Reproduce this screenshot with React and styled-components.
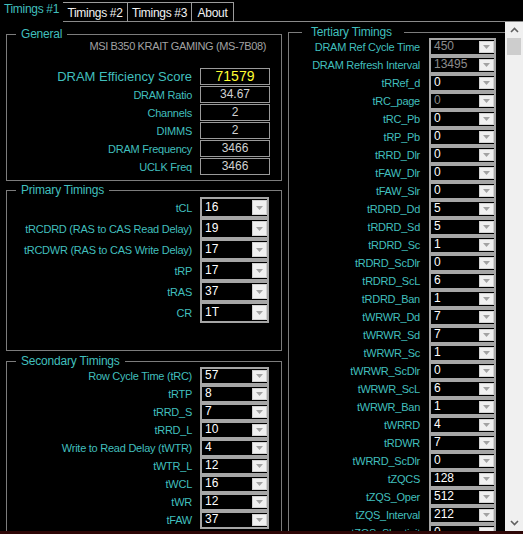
import React from "react";
import styled, { createGlobalStyle } from "styled-components";

const TEAL = "#40bfbd";

const GlobalStyle = createGlobalStyle`
  html, body {
    margin: 0;
    padding: 0;
    background: #000;
  }
  body {
    font-family: "Liberation Sans", Arial, sans-serif;
  }
`;

const Window = styled.div`
  width: 523px;
  height: 534px;
  background: #000;
  overflow: hidden;
  display: flex;
  flex-direction: column;
  font-family: "Liberation Sans", Arial, sans-serif;
`;

const TabBar = styled.div`
  display: flex;
  align-items: flex-end;
  height: 22px;
  flex-shrink: 0;
`;

const Tab = styled.div`
  box-sizing: border-box;
  width: ${(p) => p.$width}px;
  height: ${(p) => (p.$active ? 22 : 20)}px;
  padding-top: ${(p) => (p.$active ? 3 : 4)}px;
  text-align: center;
  font-size: 12px;
  letter-spacing: -0.3px;
  line-height: 13px;
  color: ${(p) => (p.$active ? TEAL : "#f2f2f2")};
  border-top: ${(p) => (p.$active ? "none" : "1px solid #9c9c9c")};
  border-right: ${(p) => (p.$active ? "none" : "1px solid #9c9c9c")};
  border-bottom: ${(p) => (p.$active ? "none" : "1px solid #8a8a8a")};
  white-space: nowrap;
`;

const TabFiller = styled.div`
  flex: 1;
  height: 1px;
  background: #8a8a8a;
`;

const Body = styled.div`
  flex: 1;
  display: flex;
  min-height: 0;
`;

const LeftColumn = styled.div`
  width: 282px;
  box-sizing: border-box;
  padding-left: 6px;
  display: flex;
  flex-direction: column;
  overflow: hidden;
  flex-shrink: 0;
`;

const Group = styled.fieldset`
  box-sizing: border-box;
  width: ${(p) => p.$width}px;
  margin: ${(p) => p.$top}px 0 0 0;
  padding: 0 ${(p) => p.$right}px ${(p) => p.$bottom}px 0;
  border: 1px solid #7c7c7c;
  min-width: 0;
  flex-shrink: 0;
`;

const Legend = styled.legend`
  margin-left: ${(p) => p.$offset}px;
  padding: 0 ${(p) => p.$padRight}px 0 ${(p) => p.$padLeft}px;
  font-size: 12px;
  line-height: 12px;
  letter-spacing: -0.2px;
  color: ${TEAL};
`;

const ModelName = styled.div`
  text-align: right;
  padding-right: 4px;
  font-size: 11px;
  line-height: 12px;
  letter-spacing: -0.35px;
  color: #a2a2a2;
`;

const FieldGrid = styled.div`
  display: grid;
  grid-template-columns: 1fr ${(p) => p.$col}px;
  column-gap: ${(p) => p.$gap}px;
  row-gap: ${(p) => p.$rowGap}px;
  align-items: center;
  margin-top: ${(p) => p.$top}px;
`;

const Label = styled.span`
  text-align: right;
  white-space: nowrap;
  font-size: ${(p) => (p.$big ? 13 : 11)}px;
  letter-spacing: ${(p) => (p.$big ? "0" : "-0.25px")};
  color: ${TEAL};
`;

const ReadBox = styled.div`
  box-sizing: border-box;
  height: 17px;
  border: 1px solid #9a9a9a;
  text-align: center;
  font-size: ${(p) => (p.$score ? 14 : 12)}px;
  line-height: 15px;
  color: ${(p) => (p.$score ? "#ffff33" : "#d2d2d2")};
`;

const ComboFrame = styled.div`
  box-sizing: border-box;
  display: flex;
  width: ${(p) => p.$width}px;
  height: ${(p) => p.$height}px;
  border: 2px solid #a6a6a6;
  background: #000;
  justify-self: start;
`;

const ComboValue = styled.span`
  flex: 1;
  padding-left: 3px;
  font-size: 12px;
  line-height: ${(p) => p.$height - 5}px;
  color: ${(p) => (p.$disabled ? "#8c8c8c" : "#ffffff")};
`;

const ComboButton = styled.span`
  width: 15px;
  margin: 1px 0;
  box-sizing: border-box;
  background: #f0f0f0;
  border: 1px solid #d2d2d2;
  display: flex;
  align-items: center;
  justify-content: center;
`;

const RightPanel = styled.div`
  flex: 1;
  display: flex;
  min-width: 0;
`;

const ScrollArea = styled.div`
  flex: 1;
  overflow: hidden;
  padding-left: 6px;
`;

const ScrollBar = styled.div`
  width: 18px;
  background: #f0f0f0;
  display: flex;
  flex-direction: column;
  flex-shrink: 0;
`;

const ScrollArrow = styled.div`
  height: 16px;
  display: flex;
  align-items: center;
  justify-content: center;
`;

const ScrollThumb = styled.div`
  height: 17px;
  margin: 0 2px;
  background: #cdcdcd;
`;

const ScrollTrack = styled.div`
  flex: 1;
`;

const StatusStrip = styled.div`
  height: 3px;
  flex-shrink: 0;
  background: #2e0707;
`;

function Combo({ value, height, width = 69, disabled }) {
  return (
    <ComboFrame $height={height} $width={width}>
      <ComboValue $height={height} $disabled={disabled}>
        {value}
      </ComboValue>
      <ComboButton>
        <svg width="7" height="4" viewBox="0 0 7 4">
          <path d="M0 0h7L3.5 4z" fill="#a3a3a3" />
        </svg>
      </ComboButton>
    </ComboFrame>
  );
}

function Chevron({ up }) {
  return (
    <svg width="9" height="6" viewBox="0 0 9 6">
      <polyline
        points={up ? "1,5 4.5,1.5 8,5" : "1,1 4.5,4.5 8,1"}
        fill="none"
        stroke="#606060"
        strokeWidth="1.6"
      />
    </svg>
  );
}

const general = [
  ["DRAM Ratio", "34.67"],
  ["Channels", "2"],
  ["DIMMS", "2"],
  ["DRAM Frequency", "3466"],
  ["UCLK Freq", "3466"],
];

const primary = [
  ["tCL", "16"],
  ["tRCDRD (RAS to CAS Read Delay)", "19"],
  ["tRCDWR (RAS to CAS Write Delay)", "17"],
  ["tRP", "17"],
  ["tRAS", "37"],
  ["CR", "1T"],
];

const secondary = [
  ["Row Cycle Time (tRC)", "57"],
  ["tRTP", "8"],
  ["tRRD_S", "7"],
  ["tRRD_L", "10"],
  ["Write to Read Delay (tWTR)", "4"],
  ["tWTR_L", "12"],
  ["tWCL", "16"],
  ["tWR", "12"],
  ["tFAW", "37"],
];

const tertiary = [
  ["DRAM Ref Cycle Time", "450", true],
  ["DRAM Refresh Interval", "13495", true],
  ["tRRef_d", "0"],
  ["tRC_page", "0", true],
  ["tRC_Pb", "0"],
  ["tRP_Pb", "0"],
  ["tRRD_Dlr", "0"],
  ["tFAW_Dlr", "0"],
  ["tFAW_Slr", "0"],
  ["tRDRD_Dd", "5"],
  ["tRDRD_Sd", "5"],
  ["tRDRD_Sc", "1"],
  ["tRDRD_ScDlr", "0"],
  ["tRDRD_ScL", "6"],
  ["tRDRD_Ban", "1"],
  ["tWRWR_Dd", "7"],
  ["tWRWR_Sd", "7"],
  ["tWRWR_Sc", "1"],
  ["tWRWR_ScDlr", "0"],
  ["tWRWR_ScL", "6"],
  ["tWRWR_Ban", "1"],
  ["tWRRD", "4"],
  ["tRDWR", "7"],
  ["tWRRD_ScDlr", "0"],
  ["tZQCS", "128"],
  ["tZQS_Oper", "512"],
  ["tZQS_Interval", "212"],
  ["tZQS_Shortinit", "0"],
];

const tabs = [
  ["Timings #1", 63],
  ["Timings #2", 65],
  ["Timings #3", 64],
  ["About", 42],
];

export default function App() {
  return (
    <Window>
      <GlobalStyle />
      <TabBar>
        {tabs.map(([name, w], i) => (
          <Tab key={name} $width={w} $active={i === 0}>
            {name}
          </Tab>
        ))}
        <TabFiller />
      </TabBar>
      <Body>
        <LeftColumn>
          <Group $width={276} $top={6} $right={11} $bottom={5}>
            <Legend $offset={9} $padLeft={5} $padRight={5}>
              General
            </Legend>
            <ModelName>MSI B350 KRAIT GAMING (MS-7B08)</ModelName>
            <FieldGrid $col={70} $gap={8} $rowGap={1} $top={16}>
              <Label $big>DRAM Efficiency Score</Label>
              <ReadBox $score>71579</ReadBox>
              {general.map(([label, value]) => (
                <React.Fragment key={label}>
                  <Label>{label}</Label>
                  <ReadBox>{value}</ReadBox>
                </React.Fragment>
              ))}
            </FieldGrid>
          </Group>

          <Group $width={276} $top={3} $right={11} $bottom={27}>
            <Legend $offset={9} $padLeft={5} $padRight={5}>
              Primary Timings
            </Legend>
            <FieldGrid $col={70} $gap={8} $rowGap={0} $top={1}>
              {primary.map(([label, value]) => (
                <React.Fragment key={label}>
                  <Label>{label}</Label>
                  <Combo value={value} height={21} />
                </React.Fragment>
              ))}
            </FieldGrid>
          </Group>

          <Group $width={276} $top={4} $right={11} $bottom={6}>
            <Legend $offset={9} $padLeft={5} $padRight={5}>
              Secondary Timings
            </Legend>
            <FieldGrid $col={70} $gap={8} $rowGap={0} $top={0}>
              {secondary.map(([label, value]) => (
                <React.Fragment key={label}>
                  <Label>{label}</Label>
                  <Combo value={value} height={18} />
                </React.Fragment>
              ))}
            </FieldGrid>
          </Group>
        </LeftColumn>

        <RightPanel>
          <ScrollArea>
            <Group $width={222} $top={4} $right={13} $bottom={6}>
              <Legend $offset={13} $padLeft={9} $padRight={12}>
                Tertiary Timings
              </Legend>
              <FieldGrid $col={67} $gap={9} $rowGap={0} $top={0}>
                {tertiary.map(([label, value, disabled]) => (
                  <React.Fragment key={label}>
                    <Label>{label}</Label>
                    <Combo
                      value={value}
                      height={18}
                      width={67}
                      disabled={disabled}
                    />
                  </React.Fragment>
                ))}
              </FieldGrid>
            </Group>
          </ScrollArea>
          <ScrollBar>
            <ScrollArrow>
              <Chevron up />
            </ScrollArrow>
            <ScrollThumb />
            <ScrollTrack />
            <ScrollArrow>
              <Chevron />
            </ScrollArrow>
          </ScrollBar>
        </RightPanel>
      </Body>
      <StatusStrip />
    </Window>
  );
}
